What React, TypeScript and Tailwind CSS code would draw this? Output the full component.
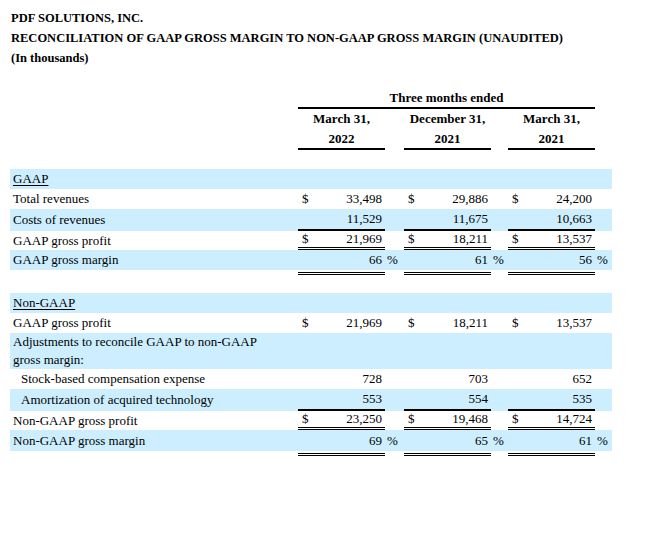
import React from "react";

type Cell = { d?: boolean; v?: string; p?: boolean };
type Line = "none" | "single" | "double";

const BAND = "bg-[#cceeff]";

function NumCell({ c, line, w }: { c?: Cell; line: Line; w: string }) {
  const lineCls =
    line === "single"
      ? "border-b-2 border-black"
      : line === "double"
      ? "border-b-[3px] border-double border-black"
      : "";
  return (
    <div className={`${w} flex items-center justify-between pl-[4px] pr-[3px] ${lineCls}`}>
      <span>{c?.d ? "$" : ""}</span>
      <span>{c?.v ?? ""}</span>
    </div>
  );
}

function GapCell({ w, pct }: { w: string; pct?: boolean }) {
  return <div className={`${w} flex items-center pl-[2px]`}>{pct ? "%" : ""}</div>;
}

function Row({
  label,
  cells,
  band,
  line = "none",
  indent,
  h = "h-[20px]",
  underline,
}: {
  label: React.ReactNode;
  cells?: Cell[];
  band?: boolean;
  line?: Line;
  indent?: boolean;
  h?: string;
  underline?: boolean;
}) {
  return (
    <div className={`flex w-[602px] ${h} ${band ? BAND : ""}`}>
      <div className={`w-[288px] flex items-center ${indent ? "pl-[11px]" : "pl-[3px]"} leading-[18px]`}>
        <span className={underline ? "underline underline-offset-2" : ""}>{label}</span>
      </div>
      <NumCell c={cells?.[0]} line={line} w="w-[87px]" />
      <GapCell w="w-[19px]" pct={cells?.[0]?.p} />
      <NumCell c={cells?.[1]} line={line} w="w-[87px]" />
      <GapCell w="w-[17px]" pct={cells?.[1]?.p} />
      <NumCell c={cells?.[2]} line={line} w="w-[87px]" />
      <GapCell w="w-[17px]" pct={cells?.[2]?.p} />
    </div>
  );
}

function DoubleUnder() {
  return (
    <div className="flex w-[602px] h-[6px] pt-[2px]">
      <div className="w-[288px]" />
      <div className="w-[87px] h-[3px] border-b-[3px] border-double border-black" />
      <div className="w-[19px]" />
      <div className="w-[87px] h-[3px] border-b-[3px] border-double border-black" />
      <div className="w-[17px]" />
      <div className="w-[87px] h-[3px] border-b-[3px] border-double border-black" />
      <div className="w-[17px]" />
    </div>
  );
}

export default function App() {
  return (
    <div
      className="w-[648px] h-[536px] bg-white text-black text-[13px] overflow-hidden"
      style={{ fontFamily: '"Liberation Serif", "Times New Roman", serif' }}
    >
      <div className="pt-[8px] pl-[11px] font-bold text-[12.5px] leading-[20px]">
        <div>PDF SOLUTIONS, INC.</div>
        <div>RECONCILIATION OF GAAP GROSS MARGIN TO NON-GAAP GROSS MARGIN (UNAUDITED)</div>
        <div>(In thousands)</div>
      </div>

      <div className="ml-[298px] mt-[20px] w-[297px] font-bold text-[13px]">
        <div className="h-[21px] border-b-2 border-black flex items-center justify-center">
          Three months ended
        </div>
        <div className="flex">
          {[
            ["March 31,", "2022"],
            ["December 31,", "2021"],
            ["March 31,", "2021"],
          ].map(([a, b], i) => (
            <React.Fragment key={i}>
              {i === 1 && <div className="w-[19px]" />}
              {i === 2 && <div className="w-[17px]" />}
              <div className="w-[87px] border-b-2 border-black text-center">
                <div className="h-[20px] flex items-center justify-center">{a}</div>
                <div className="h-[19px] flex items-center justify-center">{b}</div>
              </div>
            </React.Fragment>
          ))}
        </div>
      </div>

      <div className="ml-[10px] mt-[19px]">
        <Row label="GAAP" band underline />
        <Row
          label="Total revenues"
          cells={[
            { d: true, v: "33,498" },
            { d: true, v: "29,886" },
            { d: true, v: "24,200" },
          ]}
        />
        <Row
          label="Costs of revenues"
          band
          line="single"
          h="h-[22px]"
          cells={[{ v: "11,529" }, { v: "11,675" }, { v: "10,663" }]}
        />
        <Row
          label="GAAP gross profit"
          line="double"
          h="h-[19px]"
          cells={[
            { d: true, v: "21,969" },
            { d: true, v: "18,211" },
            { d: true, v: "13,537" },
          ]}
        />
        <Row
          label="GAAP gross margin"
          band
          cells={[
            { v: "66", p: true },
            { v: "61", p: true },
            { v: "56", p: true },
          ]}
        />
        <DoubleUnder />
      </div>

      <div className="ml-[10px] mt-[17px]">
        <Row label="Non-GAAP" band underline />
        <Row
          label="GAAP gross profit"
          cells={[
            { d: true, v: "21,969" },
            { d: true, v: "18,211" },
            { d: true, v: "13,537" },
          ]}
        />
        <Row
          label={
            <>
              Adjustments to reconcile GAAP to non-GAAP
              <br />
              gross margin:
            </>
          }
          band
          h="h-[36px]"
        />
        <Row
          label="Stock-based compensation expense"
          indent
          cells={[{ v: "728" }, { v: "703" }, { v: "652" }]}
        />
        <Row
          label="Amortization of acquired technology"
          indent
          band
          line="single"
          h="h-[22px]"
          cells={[{ v: "553" }, { v: "554" }, { v: "535" }]}
        />
        <Row
          label="Non-GAAP gross profit"
          line="double"
          h="h-[19px]"
          cells={[
            { d: true, v: "23,250" },
            { d: true, v: "19,468" },
            { d: true, v: "14,724" },
          ]}
        />
        <Row
          label="Non-GAAP gross margin"
          band
          h="h-[21px]"
          cells={[
            { v: "69", p: true },
            { v: "65", p: true },
            { v: "61", p: true },
          ]}
        />
        <DoubleUnder />
      </div>
    </div>
  );
}
